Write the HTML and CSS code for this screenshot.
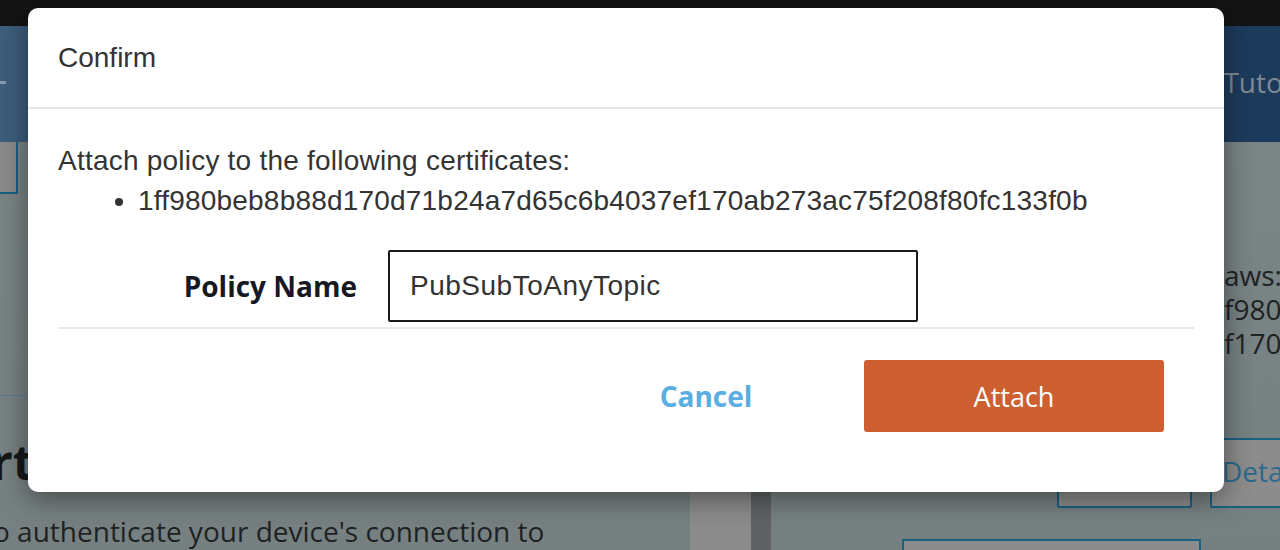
FILE: index.html
```html
<!DOCTYPE html>
<html>
<head>
<meta charset="utf-8">
<link rel="stylesheet" href="styles.css">
</head>
<body>
<div class="page">
  <div class="topbar"></div>
  <div class="header">
    <span class="header-dash"></span>
    <span class="header-link">Tutorial</span>
  </div>
  <div class="content">
    <div class="left-col">
      <div class="left-btn"></div>
      <div class="left-rule"></div>
      <div class="left-title">Certificates</div>
      <div class="left-text">to authenticate your device's connection to</div>
    </div>
    <div class="strip"></div>
    <div class="divider-bar"></div>
    <div class="right-col">
      <div class="right-lines">
        <div>aws:iot</div>
        <div>f980beb</div>
        <div>f170ab2</div>
      </div>
      <div class="right-btns">
        <div class="rbtn rbtn-a"></div>
        <div class="rbtn rbtn-b">Details</div>
      </div>
      <div class="right-box"></div>
    </div>
  </div>
</div>

<div class="modal">
  <div class="modal-header">Confirm</div>
  <div class="modal-body">
    <p class="intro">Attach policy to the following certificates:</p>
    <ul class="cert-list">
      <li>1ff980beb8b88d170d71b24a7d65c6b4037ef170ab273ac75f208f80fc133f0b</li>
    </ul>
    <div class="form-row">
      <label class="form-label">Policy Name</label>
      <div class="form-input">PubSubToAnyTopic</div>
    </div>
  </div>
  <div class="modal-footer">
    <button class="btn btn-cancel">Cancel</button>
    <button class="btn btn-attach">Attach</button>
  </div>
</div>
</body>
</html>
```

FILE: styles.css
```css
html, body {
  margin: 0;
  padding: 0;
}
body {
  width: 1280px;
  height: 550px;
  overflow: hidden;
  background: #788283;
  font-family: "Liberation Sans", Arial, sans-serif;
  position: relative;
}
.page {
  width: 1280px;
  height: 550px;
  display: flex;
  flex-direction: column;
  overflow: hidden;
}
.topbar {
  height: 26px;
  background: #141414;
  flex: none;
}
.header {
  height: 116px;
  flex: none;
  background: linear-gradient(90deg, #3d5e7c 0%, #2a4a6a 60%, #1c3a5c 100%);
  display: flex;
  align-items: center;
  justify-content: space-between;
  overflow: hidden;
}
.header-dash {
  width: 6px;
  height: 3px;
  background: #8a9aa8;
  margin-top: -4px;
}
.header-link {
  font-family: "Open Sans", sans-serif;
  font-size: 28px;
  color: #7f8a92;
  margin-right: -44px;
  margin-top: -4px;
  white-space: nowrap;
}
.content {
  flex: 1;
  min-height: 0;
  display: flex;
  overflow: hidden;
  background: linear-gradient(180deg, #7a8586 0%, #768081 100%);
}
.left-col {
  width: 690px;
  flex: none;
  display: flex;
  flex-direction: column;
  overflow: hidden;
}
.left-btn {
  width: 16px;
  height: 50px;
  flex: none;
  background: #8a8a8a;
  border: 2px solid #1a5f80;
  border-left: none;
  border-top: none;
}
.left-rule {
  height: 1px;
  flex: none;
  background: #5d7c8e;
  margin-top: 201px;
}
.left-title {
  font-family: "Open Sans", sans-serif;
  font-weight: 700;
  font-size: 48px;
  line-height: 60px;
  color: #151718;
  margin-top: 36px;
  margin-left: -68px;
  white-space: nowrap;
}
.left-text {
  font-family: "Open Sans", sans-serif;
  font-size: 28px;
  color: #1f2223;
  margin-top: 20px;
  margin-left: -17px;
  white-space: nowrap;
}
.strip {
  width: 61px;
  flex: none;
  background: #8b8b8b;
}
.divider-bar {
  width: 20px;
  flex: none;
  background: #5e6263;
}
.right-col {
  flex: 1;
  display: flex;
  flex-direction: column;
  overflow: hidden;
}
.right-lines {
  margin-top: 116px;
  margin-left: 453px;
  font-family: "Open Sans", sans-serif;
  font-size: 28px;
  line-height: 34px;
  color: #1f2223;
  white-space: nowrap;
}
.right-btns {
  display: flex;
  gap: 18px;
  margin-top: 78px;
  margin-left: 286px;
}
.rbtn {
  height: 66px;
  border: 2px solid #1a6080;
  border-radius: 2px;
  background: #8c8c8c;
  flex: none;
}
.rbtn-a {
  width: 131px;
}
.rbtn-b {
  width: 120px;
  font-family: "Open Sans", sans-serif;
  font-size: 28px;
  color: #2a6a8c;
  line-height: 62px;
  padding-left: 10px;
  white-space: nowrap;
  overflow: hidden;
}
.right-box {
  width: 295px;
  height: 40px;
  flex: none;
  margin-top: 31px;
  margin-left: 131px;
  border: 2px solid #1a6080;
  background: #8c8c8c;
}

/* Modal */
.modal {
  position: absolute;
  left: 28px;
  top: 8px;
  width: 1196px;
  height: 484px;
  background: #fff;
  border-radius: 10px;
  box-shadow: 0 6px 28px rgba(0, 0, 0, 0.45);
  display: flex;
  flex-direction: column;
  color: #333;
}
.modal-header {
  height: 101px;
  flex: none;
  box-sizing: border-box;
  padding: 33px 0 0 30px;
  font-size: 28px;
  line-height: 34px;
  color: #333;
  border-bottom: 2px solid #e6e6e6;
}
.modal-body {
  padding: 32px 30px 0 30px;
  font-size: 28px;
}
.intro {
  margin: 0;
  line-height: 40px;
  letter-spacing: 0.22px;
}
.cert-list {
  margin: 0;
  padding-left: 80px;
  line-height: 40px;
  letter-spacing: 0.2px;
}
.form-row {
  display: flex;
  align-items: center;
  margin-top: 29px;
  padding-bottom: 5px;
  border-bottom: 2px solid #e9e9e9;
}
.form-label {
  width: 299px;
  box-sizing: border-box;
  text-align: right;
  font-family: "Open Sans", sans-serif;
  font-weight: 700;
  font-size: 28px;
  color: #16191f;
}
.form-input {
  margin-left: 31px;
  width: 530px;
  height: 72px;
  box-sizing: border-box;
  border: 2px solid #1a1a1a;
  border-radius: 2px;
  padding-left: 20px;
  display: flex;
  align-items: center;
  font-size: 28px;
  letter-spacing: 0.5px;
  color: #333;
}
.modal-footer {
  display: flex;
  justify-content: flex-end;
  gap: 8px;
  padding: 31px 60px 0 0;
}
.btn {
  width: 300px;
  height: 72px;
  border: none;
  border-radius: 3px;
  font-family: "Open Sans", sans-serif;
  font-size: 27px;
  cursor: pointer;
  padding: 0;
}
.btn-cancel {
  background: transparent;
  color: #5aaee2;
  font-weight: 700;
  font-size: 28px;
}
.btn-attach {
  background: #cd5f31;
  color: #fff;
}
```
